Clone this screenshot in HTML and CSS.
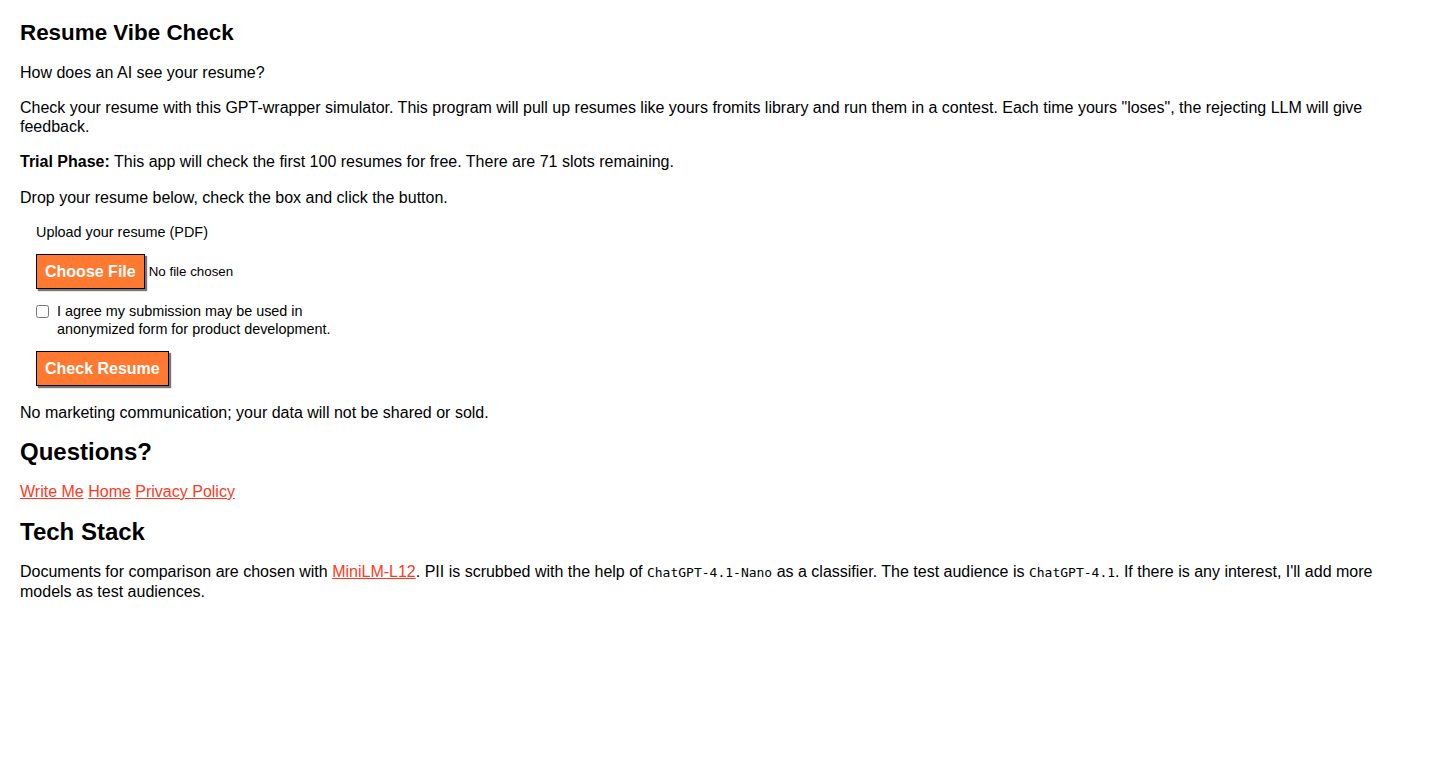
FILE: index.html
```html
<!DOCTYPE html>
<html lang="en">
<head>
<meta charset="utf-8">
<title>Resume Vibe Check</title>
<link rel="stylesheet" href="styles.css">
</head>
<body>
<main class="page">
  <h1 class="title">Resume Vibe Check</h1>
  <p class="para">How does an AI see your resume?</p>
  <p class="para">Check your resume with this GPT-wrapper simulator. This program will pull up resumes like yours fromits library and run them in a contest. Each time yours "loses", the rejecting LLM will give feedback.</p>
  <p class="para para-wide"><strong>Trial Phase:</strong> This app will check the first 100 resumes for free. There are 71 slots remaining.</p>
  <p class="para">Drop your resume below, check the box and click the button.</p>
  <form class="upload-form">
    <label class="field-label" for="resume">Upload your resume (PDF)</label>
    <div class="file-row">
      <label class="btn" for="resume">Choose File</label>
      <input class="file-input" id="resume" type="file" accept="application/pdf">
      <span class="file-name">No file chosen</span>
    </div>
    <div class="agree-row">
      <input class="checkbox" id="agree" type="checkbox">
      <label class="agree-label" for="agree">I agree my submission may be used in anonymized form for product development.</label>
    </div>
    <div class="submit-row">
      <button class="btn" type="button">Check Resume</button>
    </div>
  </form>
  <p class="para">No marketing communication; your data will not be shared or sold.</p>
  <h2 class="section-title">Questions?</h2>
  <p class="para para-wide"><a href="#">Write Me</a> <a href="#">Home</a> <a href="#">Privacy Policy</a></p>
  <h2 class="section-title">Tech Stack</h2>
  <p class="para para-tech">Documents for comparison are chosen with <a href="#">MiniLM-L12</a>. PII is scrubbed with the help of <code class="code">ChatGPT-4.1-Nano</code> as a classifier. The test audience is <code class="code">ChatGPT-4.1</code>. If there is any interest, I'll add more models as test audiences.</p>
</main>
</body>
</html>
```

FILE: styles.css
```css
html, body {
  margin: 0;
  padding: 0;
  background: #ffffff;
}

body {
  font-family: "Liberation Sans", Arial, sans-serif;
  font-size: 16px;
  color: #000000;
}

.page {
  padding: 20px 20px;
}

.title {
  font-size: 22.4px;
  font-weight: bold;
  margin: 0 0 18px 0;
  line-height: 25px;
}

.para {
  margin: 0 0 16px 0;
  line-height: 19px;
}

.para-wide {
  margin-bottom: 17px;
}

.para-tech {
  margin-top: 2px;
}

.section-title {
  font-size: 24px;
  font-weight: bold;
  margin: 0 0 16px 0;
  line-height: 28px;
}

a {
  color: #ff3a1f;
  text-decoration: underline;
}

.code {
  font-family: "DejaVu Sans Mono", monospace;
  font-size: 13px;
}

.upload-form {
  display: flex;
  flex-direction: column;
  align-items: flex-start;
  padding: 0 16px;
  margin: 0 0 17px 0;
}

.field-label {
  font-size: 14.4px;
  line-height: 18px;
  margin: 0 0 13px 0;
}

.file-row {
  display: flex;
  align-items: center;
  gap: 4px;
  margin: 0 0 13px 0;
}

.file-input {
  display: none;
}

.file-name {
  font-size: 13.33px;
}

.btn {
  display: inline-block;
  background: #ff7a30;
  color: #ffffff;
  font-family: "Liberation Sans", Arial, sans-serif;
  font-size: 16px;
  font-weight: bold;
  line-height: 19px;
  padding: 7px 8px;
  border: 1px solid #000000;
  box-shadow: 2px 2px 1px #777777;
  cursor: pointer;
}

.agree-row {
  display: flex;
  align-items: flex-start;
  gap: 8px;
  margin: 0 0 13px 0;
  width: 320px;
}

.checkbox {
  margin: 3px 0 0 0;
  width: 13px;
  height: 13px;
}

.agree-label {
  font-size: 14.4px;
  line-height: 18px;
}

.submit-row {
  display: flex;
}
```
